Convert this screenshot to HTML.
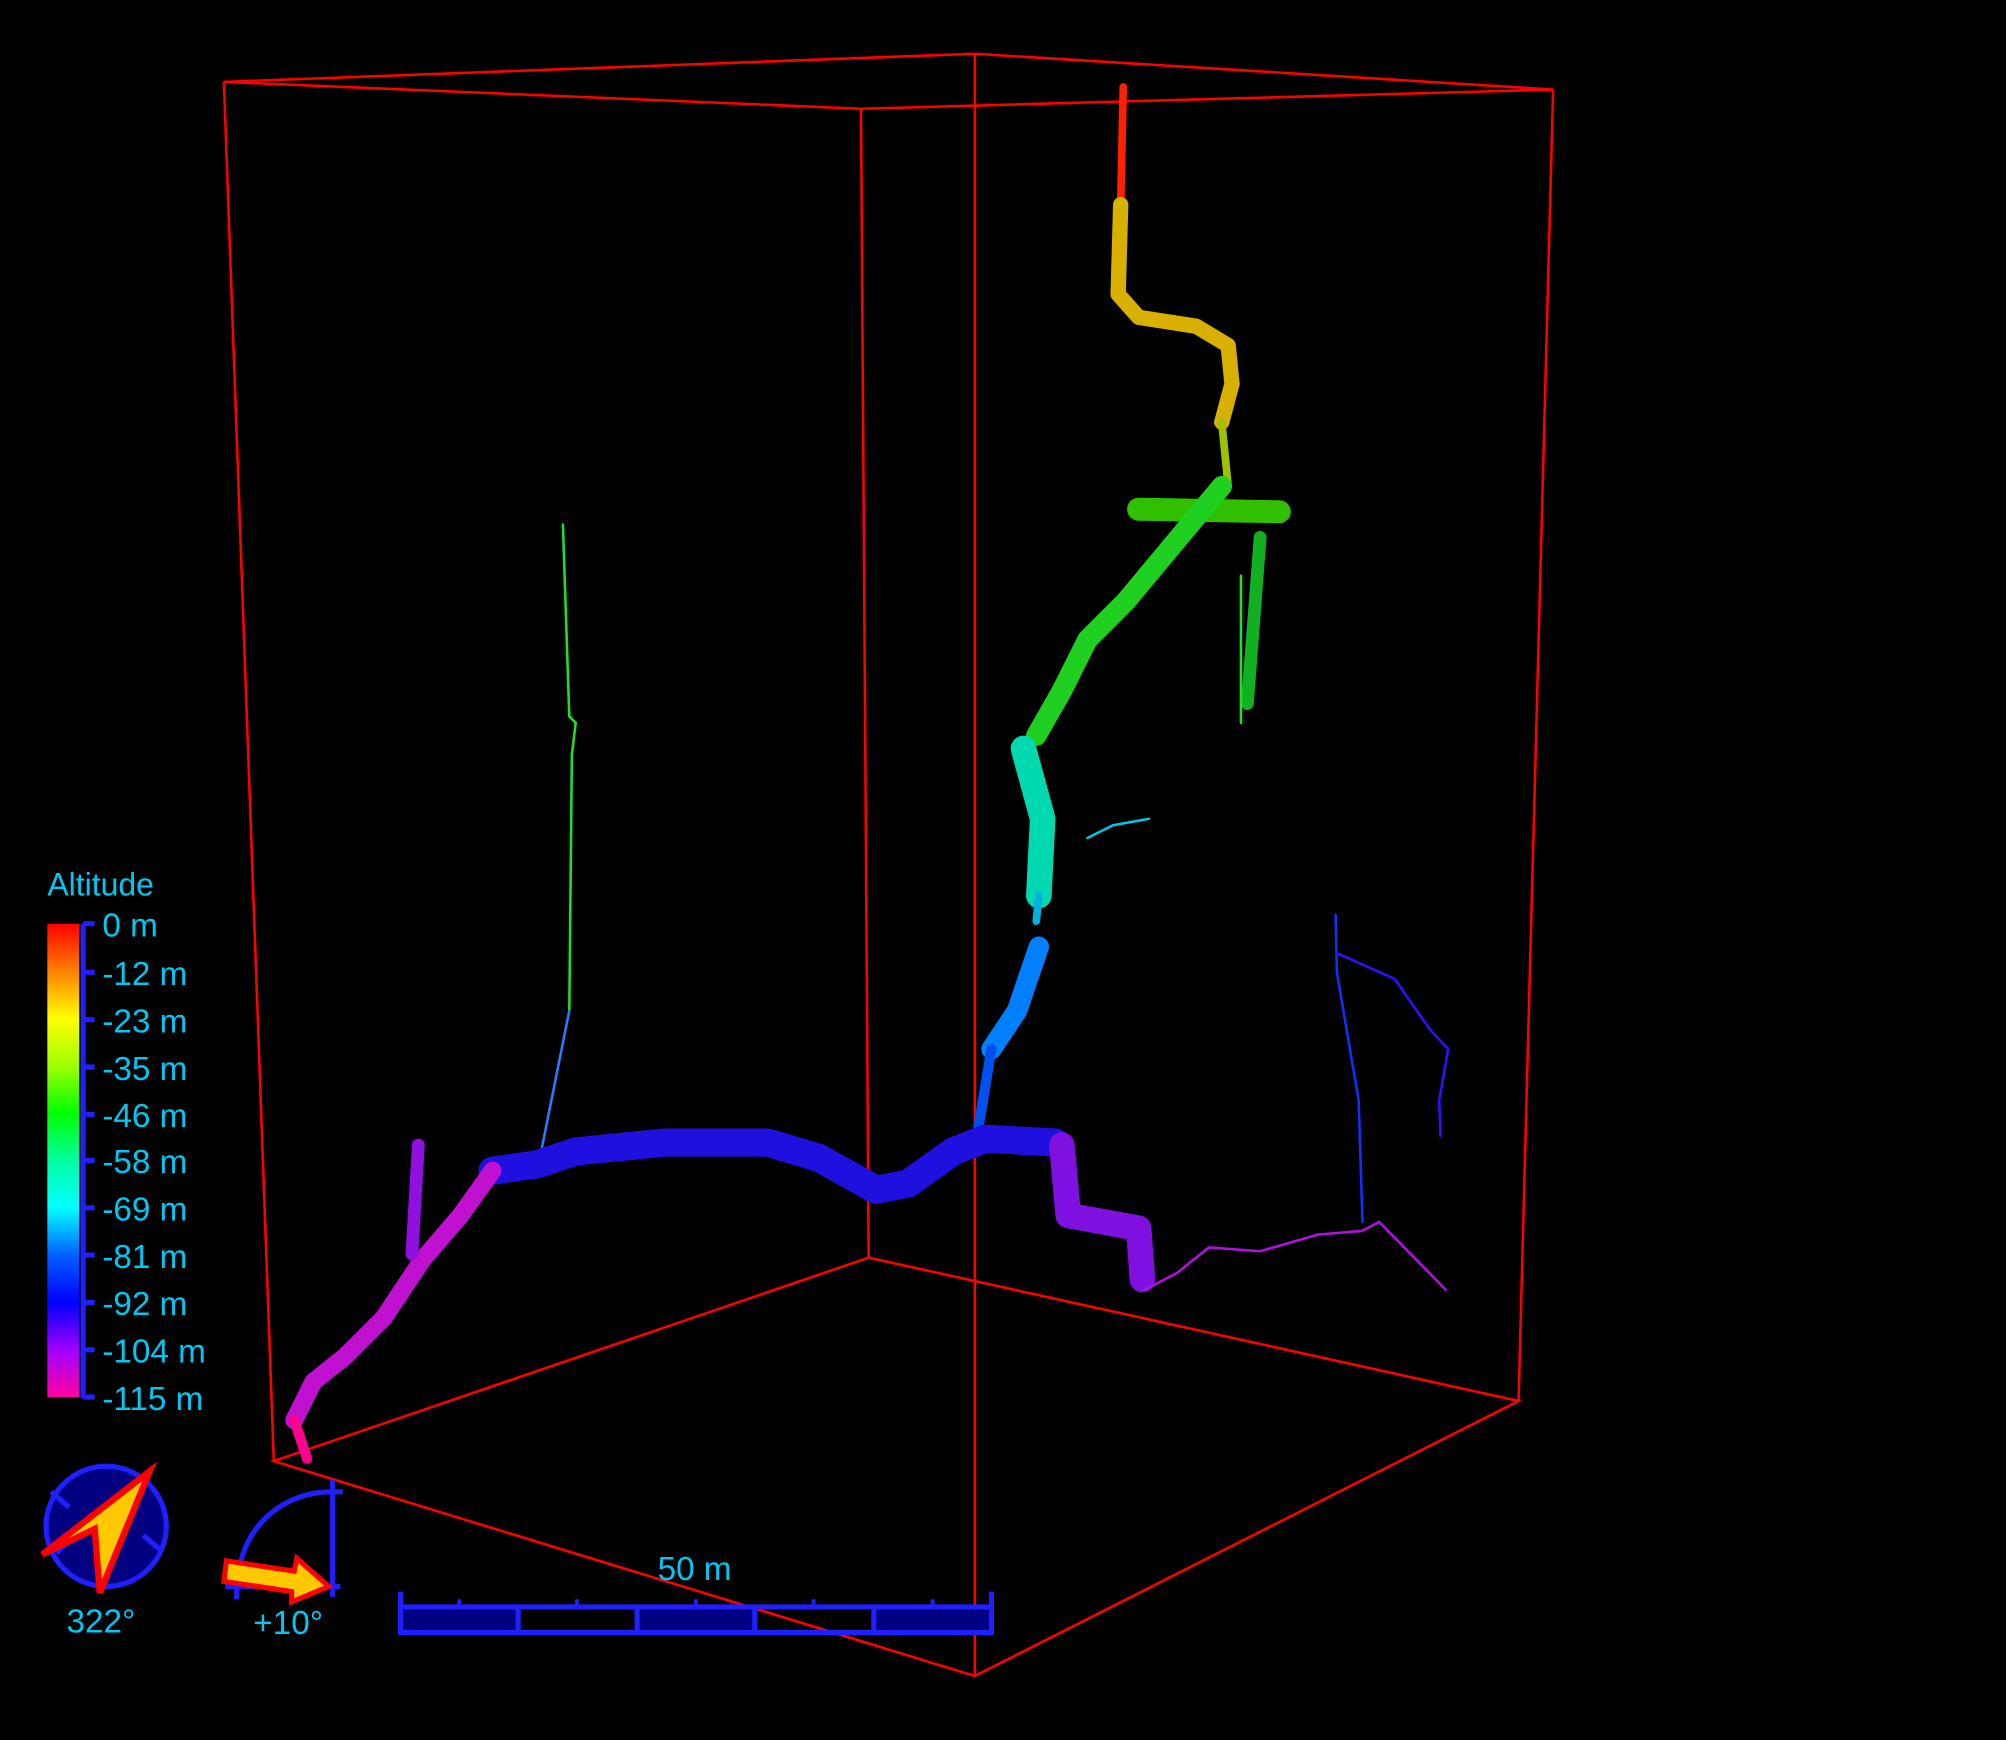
<!DOCTYPE html>
<html><head><meta charset="utf-8"><style>
html,body{margin:0;padding:0;background:#000;overflow:hidden}
svg{display:block}
text{font-family:"Liberation Sans",sans-serif;fill:#00c8f0}
</style></head><body>
<svg width="2006" height="1740" viewBox="0 0 1568 1360" preserveAspectRatio="none" xmlns="http://www.w3.org/2000/svg">
<defs>
<linearGradient id="alt" x1="0" y1="0" x2="0" y2="1">
<stop offset="0" stop-color="#ff0000"/>
<stop offset="0.1" stop-color="#ff8000"/>
<stop offset="0.2" stop-color="#ffff00"/>
<stop offset="0.3" stop-color="#a0ff00"/>
<stop offset="0.4" stop-color="#00ff00"/>
<stop offset="0.5" stop-color="#00ffa0"/>
<stop offset="0.6" stop-color="#00ffff"/>
<stop offset="0.7" stop-color="#0060ff"/>
<stop offset="0.8" stop-color="#0000ff"/>
<stop offset="0.9" stop-color="#a000ff"/>
<stop offset="1" stop-color="#ff00a0"/>
</linearGradient>
</defs>
<rect width="1568" height="1360" fill="#000"/>
<g stroke="#ff0000" stroke-width="2" fill="none">
<path d="M175 64 L762 42 L1214 70 L673 85 Z"/>
<path d="M175 64 L214 1142 M673 85 L679 983 M762 42 L762 1310 M1214 70 L1187 1095"/>
<path d="M214 1142 L679 983 L1187 1095 L762 1310 Z"/>
</g>
<g fill="none" stroke-linecap="round" stroke-linejoin="round">
<path d="M440 410 L445 560 L450 565 L447 590 L445 790" stroke="#20e020" stroke-width="2"/>
<path d="M445 790 L422 905" stroke="#2080ff" stroke-width="2"/>
<path d="M878 68 L876 160" stroke="#ff2000" stroke-width="6"/>
<path d="M876 160 L874 230 L890 248 L935 255 L960 270 L963 300 L955 330" stroke="#d8b000" stroke-width="12"/>
<path d="M955 330 L960 380" stroke="#a0c000" stroke-width="6"/>
<path d="M890 398 L1000 400" stroke="#30c000" stroke-width="18"/>
<path d="M955 380 L930 410 L905 440 L880 470 L850 500 L830 540 L810 575" stroke="#20d020" stroke-width="16"/>
<path d="M985 420 L975 550" stroke="#10b020" stroke-width="10"/>
<path d="M970 450 L970 565" stroke="#20e020" stroke-width="2"/>
<path d="M800 585 L815 640 L812 700" stroke="#00d8b0" stroke-width="20"/>
<path d="M850 655 L870 645 L898 640" stroke="#00c8e0" stroke-width="2"/>
<path d="M812 700 L810 720" stroke="#00b0e0" stroke-width="6"/>
<path d="M812 740 L795 790 L775 820" stroke="#0080ff" stroke-width="16"/>
<path d="M775 820 L765 880" stroke="#0050f0" stroke-width="8"/>
<path d="M385 915 L420 910 L450 900 L520 893 L600 893 L640 905 L685 930 L710 925 L745 900 L770 890 L825 893" stroke="#2010e0" stroke-width="22"/>
<path d="M830 895 L835 950 L890 960 L893 1000" stroke="#8010e0" stroke-width="20"/>
<path d="M385 915 L360 950 L330 985 L300 1030 L270 1060 L245 1080 L230 1110" stroke="#c010d0" stroke-width="14"/>
<path d="M230 1110 L240 1140" stroke="#ff0090" stroke-width="8"/>
<path d="M327 895 L322 980" stroke="#9010e0" stroke-width="10"/>
<path d="M1044 715 L1045 760 L1062 860 L1065 955" stroke="#1030ff" stroke-width="2"/>
<path d="M1045 745 L1090 765 L1118 805 L1132 820 L1125 860 L1126 888" stroke="#3010ff" stroke-width="2"/>
<path d="M895 1008 L920 995 L945 975 L985 978 L1030 965 L1065 962 L1078 955 L1130 1008" stroke="#b010e0" stroke-width="2"/>
</g>
<text x="37" y="700" font-size="25">Altitude</text>
<rect x="37" y="722" width="25" height="370" fill="url(#alt)"/>
<g stroke="#2020ff" stroke-width="4" fill="none">
<line x1="65" y1="722" x2="65" y2="1093"/>
<path d="M65 722h9 M65 760h9 M65 797h9 M65 834h9 M65 871h9 M65 907h9 M65 944h9 M65 981h9 M65 1018h9 M65 1055h9 M65 1092h9"/>
</g>
<g font-size="26">
<text x="80" y="732">0 m</text>
<text x="80" y="770">-12 m</text>
<text x="80" y="807">-23 m</text>
<text x="80" y="844">-35 m</text>
<text x="80" y="881">-46 m</text>
<text x="80" y="917">-58 m</text>
<text x="80" y="954">-69 m</text>
<text x="80" y="991">-81 m</text>
<text x="80" y="1028">-92 m</text>
<text x="80" y="1065">-104 m</text>
<text x="80" y="1102">-115 m</text>
</g>
<ellipse cx="83" cy="1193" rx="47" ry="47" fill="#000080" stroke="#2020ff" stroke-width="4"/>
<g stroke="#2020ff" stroke-width="4"><path d="M40 1166 l14 12 M112 1200 l14 12 M44 1214 l10 -10"/></g>
<path d="M117 1150 L78 1245 L74 1195 L33 1215 Z" fill="#ffc800" stroke="#ff0000" stroke-width="5" stroke-linejoin="miter"/>
<text x="52" y="1276" font-size="26">322°</text>
<g stroke="#2020ff" stroke-width="4" fill="none">
<path d="M187 1228 A72 70 0 0 1 260 1166"/>
<line x1="260" y1="1157" x2="260" y2="1248"/><line x1="256" y1="1166" x2="268" y2="1166"/>
<line x1="176" y1="1240" x2="266" y2="1240"/><line x1="185" y1="1232" x2="185" y2="1250"/>
</g>
<path d="M177 1220 L230 1228 L232 1218 L257 1240 L228 1252 L228 1244 L175 1236 Z" fill="#ffc800" stroke="#ff0000" stroke-width="4"/>
<text x="198" y="1277" font-size="26">+10°</text>
<text x="514" y="1235" font-size="26">50 m</text>
<rect x="313" y="1256" width="92" height="20" fill="#000080"/>
<rect x="498" y="1256" width="92" height="20" fill="#000080"/>
<rect x="683" y="1256" width="92" height="20" fill="#000080"/>
<g stroke="#2020ff" stroke-width="4" fill="none">
<path d="M313 1256 H775 M313 1276 H775 M313 1244 V1278 M775 1244 V1278 M405 1256 V1276 M498 1256 V1276 M590 1256 V1276 M683 1256 V1276"/>
<path d="M359 1250v6 M451 1250v6 M544 1250v6 M636 1250v6 M729 1250v6" stroke-width="3"/>
</g>
</svg>
</body></html>
